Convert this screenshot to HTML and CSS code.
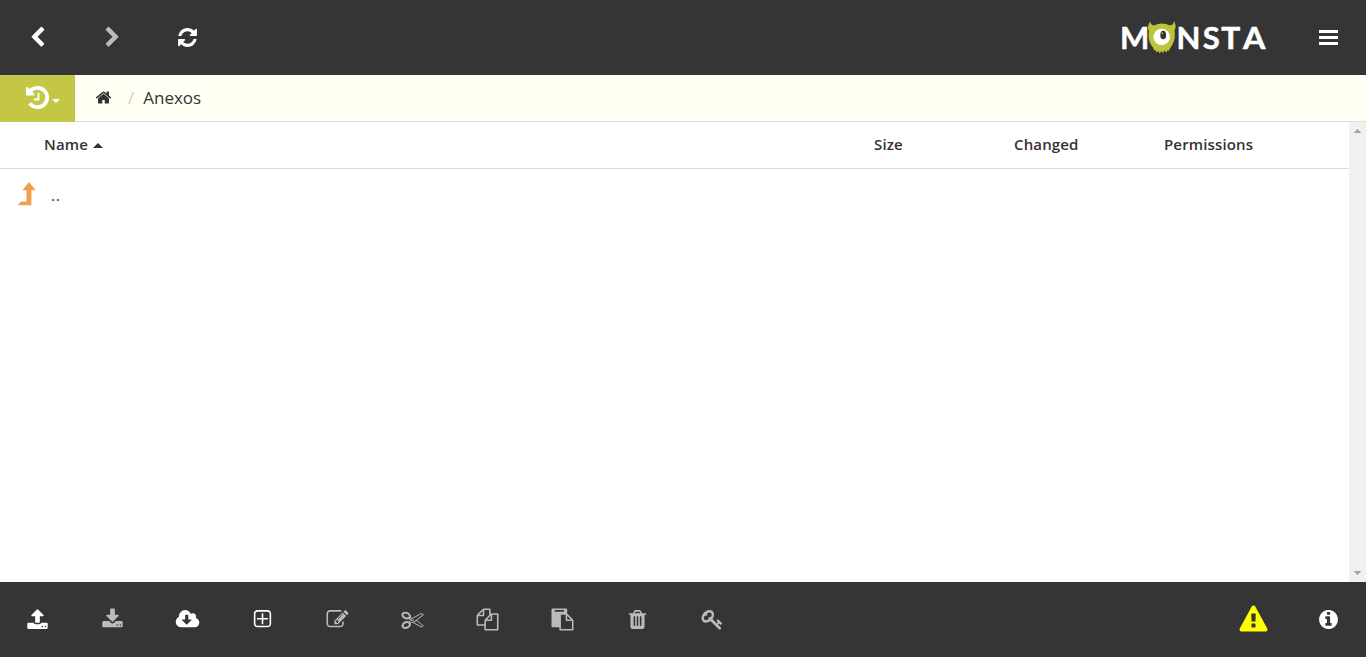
FILE: index.html
```
<!DOCTYPE html>
<html lang="en">
<head>
    <meta charset="UTF-8">
    <meta name="viewport" content="width=device-width, initial-scale=1.0">
    <title>Monsta</title>
    <link rel="stylesheet" href="styles.css">
</head>
<body>
    <div class="toolbar">
        <button class="tool" title="Back"><svg class="icon" viewBox="0 0 1792 1792"><path d="M1427 301l-531 531 531 531q19 19 19 45t-19 45l-166 166q-19 19-45 19t-45-19l-742-742q-19-19-19-45t19-45l742-742q19-19 45-19t45 19l166 166q19 19 19 45t-19 45z"/></svg></button>
        <button class="tool disabled" title="Forward"><svg class="icon" viewBox="0 0 1792 1792"><path d="M1363 877l-742 742q-19 19-45 19t-45-19l-166-166q-19-19-19-45t19-45l531-531-531-531q-19-19-19-45t19-45l166-166q19-19 45-19t45 19l742 742q19 19 19 45t-19 45z"/></svg></button>
        <button class="tool" title="Refresh"><svg class="icon" viewBox="0 0 1792 1792"><path d="M1639 1056q0 5-1 7-64 268-268 434.5t-478 166.5q-146 0-282.5-55t-243.5-157l-129 129q-19 19-45 19t-45-19-19-45v-448q0-26 19-45t45-19h448q26 0 45 19t19 45-19 45l-137 137q71 66 161 102t187 36q134 0 250-65t186-179q11-17 53-117 8-23 30-23h192q13 0 22.5 9.5t9.5 22.5zm25-800v448q0 26-19 45t-45 19h-448q-26 0-45-19t-19-45 19-45l138-138q-148-137-349-137-134 0-250 65t-186 179q-11 17-53 117-8 23-30 23h-199q-13 0-22.5-9.5t-9.5-22.5v-7q65-268 270-434.5t480-166.5q146 0 284 55.5t245 156.5l130-129q19-19 45-19t45 19 19 45z"/></svg></button>
        <div class="spacer"></div>
        <svg class="logo" viewBox="0 0 150 40">
            <text class="logo-text" y="31" x="0 56.4 82.8">MNS</text>
            <text class="logo-text" y="31" x="101.2" textLength="19" lengthAdjust="spacingAndGlyphs">T</text>
            <text class="logo-text" y="31" x="123" textLength="22.4" lengthAdjust="spacingAndGlyphs">A</text>
            <path class="logo-body" d="M30 3q.5 4 4 4.5q8-4 16 0q3.5-.5 4-4.5q3 5 .5 9.5q1.5 8-2.5 15q-2 2-3 5.500l-1.500-1-1 2.500-2-2-1.500 2.500-1.500-2-2 2.500-1-2.500-2 1.500-1-2.500-1.500.5q0-2.500-2.500-5q-4-6-2.500-14.500q-2.500-4.500 1.500-10z"/>
            <circle class="logo-eye" cx="41.700" cy="19" r="8.300"/>
            <ellipse class="logo-pupil" cx="43.200" cy="17" rx="2.900" ry="4.300"/>
            <circle class="logo-eye" cx="42.200" cy="15.200" r=".7"/>
        </svg>
        <button class="tool menu" title="Menu"><svg class="icon-menu" viewBox="0 0 25 25"><path d="M3 5h19v3H3zM3 11h19v3H3zM3 17h19v3H3z"/></svg></button>
    </div>

    <div class="location">
        <button class="history" title="History">
            <svg class="icon-history" viewBox="0 0 1792 1792"><path d="M1664 896q0 156-61 298t-164 245-245 164-298 61q-172 0-327-72.5t-264-204.5q-7-10-6.5-22.5t8.5-20.5l137-138q10-9 25-9 16 2 23 12 73 95 179 147t225 52q104 0 198.5-40.5t163.5-109.5 109.5-163.5 40.5-198.5-40.5-198.5-109.5-163.5-163.5-109.5-198.5-40.5q-98 0-188 35.5t-160 101.5l137 138q31 30 14 69-17 40-59 40h-448q-26 0-45-19t-19-45v-448q0-42 40-59 39-17 69 14l130 129q107-101 244.5-156.5t284.5-55.5q156 0 298 61t245 164 164 245 61 298zm-640-288v448q0 14-9 23t-23 9h-320q-14 0-23-9t-9-23v-64q0-14 9-23t23-9h224v-352q0-14 9-23t23-9h64q14 0 23 9t9 23z"/></svg>
            <span class="caret-down"></span>
        </button>
        <div class="breadcrumb">
            <svg class="icon-home" viewBox="0 0 1792 1792"><path d="M1472 992v480q0 26-19 45t-45 19h-384v-384h-256v384h-384q-26 0-45-19t-19-45v-480q0-1 .5-3t.5-3l575-474 575 474q1 2 1 6zm223-69l-62 74q-8 9-21 11h-3q-13 0-21-7l-692-577-692 577q-12 8-24 7-13-2-21-11l-62-74q-8-10-7-23.5t11-21.5l719-599q32-26 76-26t76 26l244 204v-195q0-14 9-23t23-9h192q14 0 23 9t9 23v408l219 182q10 8 11 21.5t-7 23.5z"/></svg>
            <span class="divider">/</span>
            <span>Anexos</span>
        </div>
    </div>

    <div class="content">
        <div class="files">
            <div class="row head">
                <div class="name">Name <span class="caret-up"></span></div>
                <div>Size</div>
                <div>Changed</div>
                <div>Permissions</div>
            </div>
            <div class="row item">
                <div class="parent">
                    <svg class="icon-up" viewBox="0 0 18 24"><path d="M11 0l6.6 8.3H13.4V23.2H.6Q0 23.2.4 22.4L2.8 19.6H8.5V8.3H4.4z"/></svg>
                    <span class="dots">..</span>
                </div>
            </div>
        </div>
        <div class="scrollbar">
            <svg class="arrow" viewBox="0 0 7 4"><path d="M3 0h1v1h1v1h1v1h1v1H0V3h1V2h1V1h1z"/></svg>
            <svg class="arrow" viewBox="0 0 7 4"><path d="M0 0h7v1H6v1H5v1H4v1H3V3H2V2H1V1H0z"/></svg>
        </div>
    </div>

    <div class="toolbar">
        <button class="tool" title="Upload"><svg class="icon" viewBox="0 0 1792 1792"><path d="M1344 1472q0-26-19-45t-45-19-45 19-19 45 19 45 45 19 45-19 19-45zm256 0q0-26-19-45t-45-19-45 19-19 45 19 45 45 19 45-19 19-45zm128-224v320q0 40-28 68t-68 28h-1472q-40 0-68-28t-28-68v-320q0-40 28-68t68-28h427q21 56 70.5 92t110.5 36h256q61 0 110.5-36t70.5-92h427q40 0 68 28t28 68zm-325-648q-17 40-59 40h-256v448q0 26-19 45t-45 19h-256q-26 0-45-19t-19-45v-448h-256q-42 0-59-40-17-39 14-69l448-448q18-19 45-19t45 19l448 448q31 30 14 69z"/></svg></button>
        <button class="tool disabled" title="Download"><svg class="icon" viewBox="0 0 1792 1792"><path d="M1344 1344q0-26-19-45t-45-19-45 19-19 45 19 45 45 19 45-19 19-45zm256 0q0-26-19-45t-45-19-45 19-19 45 19 45 45 19 45-19 19-45zm128-224v320q0 40-28 68t-68 28h-1472q-40 0-68-28t-28-68v-320q0-40 28-68t68-28h465l135 136q58 56 136 56t136-56l136-136h464q40 0 68 28t28 68zm-325-569q17 41-14 70l-448 448q-18 19-45 19t-45-19l-448-448q-31-29-14-70 17-39 59-39h256v-448q0-26 19-45t45-19h256q26 0 45 19t19 45v448h256q42 0 59 39z"/></svg></button>
        <button class="tool" title="Fetch"><svg class="icon" viewBox="0 0 1792 1792"><path d="M1216 928q0-14-9-23t-23-9h-224v-352q0-13-9.5-22.5t-22.5-9.5h-192q-13 0-22.5 9.5t-9.5 22.5v352h-224q-13 0-22.5 9.5t-9.5 22.5q0 14 9 23l352 352q9 9 23 9t23-9l351-351q10-12 10-24zm640 224q0 159-112.5 271.5t-271.5 112.5h-1088q-185 0-316.5-131.5t-131.5-316.5q0-130 70-240t188-165q-2-30-2-43 0-212 150-362t362-150q156 0 285.5 87t188.5 231q71-62 166-62 106 0 181 75t75 181q0 76-41 138 130 31 213.5 135.5t83.5 238.5z"/></svg></button>
        <button class="tool" title="New"><svg class="icon" viewBox="0 0 1792 1792"><path d="M1344 800v64q0 14-9 23t-23 9h-352v352q0 14-9 23t-23 9h-64q-14 0-23-9t-9-23v-352h-352q-14 0-23-9t-9-23v-64q0-14 9-23t23-9h352v-352q0-14 9-23t23-9h64q14 0 23 9t9 23v352h352q14 0 23 9t9 23zm128 448v-832q0-66-47-113t-113-47h-832q-66 0-113 47t-47 113v832q0 66 47 113t113 47h832q66 0 113-47t47-113zm128-832v832q0 119-84.5 203.5t-203.5 84.5h-832q-119 0-203.5-84.5t-84.5-203.5v-832q0-119 84.5-203.5t203.5-84.5h832q119 0 203.5 84.5t84.5 203.5z"/></svg></button>
        <button class="tool disabled" title="Edit"><svg class="icon" viewBox="0 0 1792 1792"><path d="M888 1184l116-116-152-152-116 116v56h96v96h56zm440-720q-16-16-33 1l-350 350q-17 17-1 33t33-1l350-350q17-17 1-33zm80 594v190q0 119-84.5 203.5t-203.5 84.5h-832q-119 0-203.5-84.5t-84.5-203.5v-832q0-119 84.5-203.5t203.5-84.5h832q63 0 117 25 15 7 18 23 3 17-9 29l-49 49q-14 14-32 8-23-6-45-6h-832q-66 0-113 47t-47 113v832q0 66 47 113t113 47h832q66 0 113-47t47-113v-126q0-13 9-22l64-64q15-15 35-7t20 29zm-96-738l288 288-672 672h-288v-288zm444 132l-92 92-288-288 92-92q28-28 68-28t68 28l152 152q28 28 28 68t-28 68z"/></svg></button>
        <button class="tool disabled" title="Cut"><svg class="icon" viewBox="0 0 1792 1792"><path d="M960 896q26 0 45 19t19 45-19 45-45 19-45-19-19-45 19-45 45-19zm300 64l507 398q28 20 25 56-5 35-35 51l-128 64q-13 7-29 7-17 0-31-8l-690-387-110 66q-8 4-12 5 14 49 10 97-7 77-56 147.5t-132 123.5q-132 84-277 84-136 0-222-78-90-84-79-207 7-76 56-147t131-124q132-84 278-84 83 0 151 31 9-13 22-22l122-73-122-73q-13-9-22-22-68 31-151 31-146 0-278-84-82-53-131-124t-56-147q-5-59 15.5-113t63.5-93q85-79 222-79 145 0 277 84 83 52 132 123t56 148q4 48-10 97 4 1 12 5l110 66 690-387q14-8 31-8 16 0 29 7l128 64q30 16 35 51 3 36-25 56zm-681-260q46-42 21-108t-106-117q-92-59-192-59-74 0-113 36-46 42-21 108t106 117q92 59 192 59 74 0 113-36zm-85 745q81-51 106-117t-21-108q-39-36-113-36-100 0-192 59-81 51-106 117t21 108q39 36 113 36 100 0 192-59zm178-613l96 58v-11q0-36 33-56l14-8-79-44-26 26q-3 3-10 11t-12 12q-2 2-4 3.5t-3 2.5zm224 224l96 32 736-576-128-64-768 431v113l-160 96 9 8q2 2 7 6 4 4 11 12t11 12l26 26zm704 416l128-64-520-408-177 138q-2 3-13 7z"/></svg></button>
        <button class="tool disabled" title="Copy"><svg class="icon" viewBox="0 0 1792 1792"><path d="M1696 384q40 0 68 28t28 68v1216q0 40-28 68t-68 28h-960q-40 0-68-28t-28-68v-288h-544q-40 0-68-28t-28-68v-672q0-40 20-88t48-76l408-408q28-28 76-48t88-20h416q40 0 68 28t28 68v328q68-40 128-40h416zm-544 213l-299 299h299v-299zm-640-384l-299 299h299v-299zm196 647l316-316v-416h-384v416q0 40-28 68t-68 28h-416v640h512v-256q0-40 20-88t48-76zm956 804v-1152h-384v416q0 40-28 68t-68 28h-416v640h896z"/></svg></button>
        <button class="tool disabled" title="Paste"><svg class="icon" viewBox="0 0 1792 1792"><path d="M768 1664h896v-640h-416q-40 0-68-28t-28-68v-416h-384v1152zm256-1440v-64q0-13-9.5-22.5t-22.5-9.5h-704q-13 0-22.5 9.5t-9.5 22.5v64q0 13 9.5 22.5t22.5 9.5h704q13 0 22.5-9.5t9.5-22.5zm256 672h299l-299-299v299zm512 128v672q0 40-28 68t-68 28h-960q-40 0-68-28t-28-68v-160h-544q-40 0-68-28t-28-68v-1344q0-40 28-68t68-28h1088q40 0 68 28t28 68v328q21 13 36 28l408 408q28 28 48 76t20 88z"/></svg></button>
        <button class="tool disabled" title="Delete"><svg class="icon" viewBox="0 0 1792 1792"><path d="M704 1376v-704q0-14-9-23t-23-9h-64q-14 0-23 9t-9 23v704q0 14 9 23t23 9h64q14 0 23-9t9-23zm256 0v-704q0-14-9-23t-23-9h-64q-14 0-23 9t-9 23v704q0 14 9 23t23 9h64q14 0 23-9t9-23zm256 0v-704q0-14-9-23t-23-9h-64q-14 0-23 9t-9 23v704q0 14 9 23t23 9h64q14 0 23-9t9-23zm-544-992h448l-48-117q-7-9-17-11h-317q-10 2-17 11zm928 32v64q0 14-9 23t-23 9h-96v948q0 83-47 143.5t-113 60.5h-832q-66 0-113-58.5t-47-141.5v-952h-96q-14 0-23-9t-9-23v-64q0-14 9-23t23-9h309l70-167q15-37 54-63t79-26h320q40 0 79 26t54 63l70 167h309q14 0 23 9t9 23z"/></svg></button>
        <button class="tool disabled" title="Permissions"><svg class="icon" viewBox="0 0 1792 1792"><path d="M832 512q0-80-56-136t-136-56-136 56-56 136q0 42 19 83-41-19-83-19-80 0-136 56t-56 136 56 136 136 56 136-56 56-136q0-42-19-83 41 19 83 19 80 0 136-56t56-136zm851 704q0 17-49 66t-66 49q-9 0-28.5-16t-36.5-33-38.5-40-24.5-26l-96 96 220 220q28 28 28 68 0 42-39 81t-81 39q-40 0-68-28l-671-671q-176 131-365 131-163 0-265.5-102.5t-102.5-265.5q0-160 95-313t248-248 313-95q163 0 265.5 102.5t102.5 265.5q0 189-131 365l355 355 96-96q-3-3-26-24.5t-40-38.5-33-36.5-16-28.5q0-17 49-66t66-49q13 0 23 10 6 6 46 44.5t82 79.5 86.5 86 73 78 28.5 41z"/></svg></button>
        <div class="spacer"></div>
        <button class="tool warning" title="Warning"><svg class="icon icon-warning" viewBox="0 0 1792 1792"><path d="M1024 1375v-190q0-14-9.5-23.5t-22.5-9.5h-192q-13 0-22.5 9.5t-9.5 23.5v190q0 14 9.5 23.5t22.5 9.5h192q13 0 22.5-9.5t9.5-23.5zm-2-374l18-459q0-12-10-19-13-11-24-11h-220q-11 0-24 11-10 7-10 21l17 457q0 10 10 16.5t24 6.5h185q14 0 23.5-6.5t10.5-16.5zm-14-934l768 1408q35 63-2 126-17 29-46.5 46t-63.5 17h-1536q-34 0-63.5-17t-46.5-46q-37-63-2-126l768-1408q17-31 47-49t65-18 65 18 47 49z"/></svg></button>
        <button class="tool" title="Info"><svg class="icon" viewBox="0 0 1792 1792"><path d="M1152 1376v-160q0-14-9-23t-23-9h-96v-512q0-14-9-23t-23-9h-320q-14 0-23 9t-9 23v160q0 14 9 23t23 9h96v320h-96q-14 0-23 9t-9 23v160q0 14 9 23t23 9h448q14 0 23-9t9-23zm-128-896v-160q0-14-9-23t-23-9h-192q-14 0-23 9t-9 23v160q0 14 9 23t23 9h192q14 0 23-9t9-23zm640 416q0 209-103 385.5t-279.5 279.5-385.5 103-385.5-103-279.5-279.5-103-385.5 103-385.5 279.5-279.5 385.5-103 385.5 103 279.5 279.5 103 385.5z"/></svg></button>
    </div>
</body>
</html>
```

FILE: styles.css
```
* { box-sizing: border-box; }
body { margin: 0; height: 100vh; display: flex; flex-direction: column; overflow: hidden; background: #fff; color: #333; font-family: "Open Sans", sans-serif; font-size: 15px; }
button { border: none; padding: 0; background: none; color: inherit; font: inherit; cursor: pointer; }
svg { display: block; flex: none; fill: currentColor; overflow: visible; }

/* top and bottom bars */
.toolbar { height: 75px; flex: none; display: flex; align-items: center; background: #353535; color: #fff; }
.tool { width: 75px; height: 75px; display: flex; align-items: center; justify-content: center; padding: 0 1px 1px 0; }
.menu { padding: 0; }
.disabled { color: #bbb; }
.warning { color: #ff0; }
.spacer { flex: 1; }
.icon { width: 22px; height: 22px; transform: translate(.5px, .5px); }
.icon-menu { width: 25px; height: 25px; }
.icon-warning { width: 28px; height: 28px; }
.logo { width: 150px; height: 40px; margin-right: 21px; }
.logo-text { fill: #fff; stroke: #fff; stroke-width: .5px; font-family: Lato, sans-serif; font-weight: 700; font-size: 31px; }
.logo-body { fill: #bcc43a; }
.logo-eye { fill: #fff; }
.logo-pupil { fill: #353535; }

/* path bar */
.location { height: 47px; flex: none; display: flex; background: #fffff3; }
.history { width: 75px; display: flex; align-items: center; padding: 0 0 2px 24px; background: #c3c745; color: #fff; }
.icon-history { width: 27px; height: 27px; }
.caret-down { margin: 7px 0 0 1px; border: 4px solid transparent; border-top-color: #fff; border-bottom: none; }
.breadcrumb { flex: 1; display: flex; align-items: center; padding: 0 0 2px 20px; border-bottom: 1px solid #ddd; font-size: 17px; }
.icon-home { width: 17px; height: 17px; margin-top: 1px; }
.divider { margin: 0 9px 0 16px; color: #ccc; }

/* file list */
.content { flex: 1; display: flex; min-height: 0; }
.files { flex: 1; }
.row { display: grid; grid-template-columns: 1fr 140px 150px 185px; align-items: center; }
.head { height: 47px; padding-bottom: 2px; border-bottom: 1px solid #ddd; font-weight: 600; letter-spacing: .15px; }
.name { display: flex; align-items: center; padding-left: 44px; }
.caret-up { margin: 2px 0 0 5px; border: 5px solid transparent; border-bottom-color: #333; border-top: none; }
.item { height: 50px; }
.parent { display: flex; align-items: center; padding-left: 18px; font-size: 16px; }
.dots { padding-top: 2px; letter-spacing: .5px; }
.icon-up { width: 18px; height: 24px; margin-right: 15px; color: #f0a04b; }
.scrollbar { width: 17px; display: flex; flex-direction: column; justify-content: space-between; align-items: center; padding: 7px 0; background: #f0f0f0; color: #a3a3a3; }
.arrow { width: 7px; height: 4px; }
```
